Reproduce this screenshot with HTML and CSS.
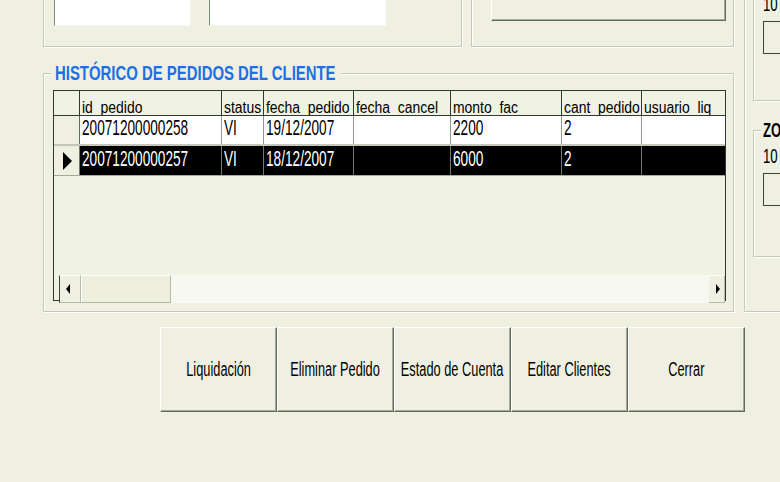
FILE: index.html
```html
<!DOCTYPE html>
<html lang="es">
<head>
<meta charset="utf-8">
<title>Histórico de pedidos</title>
<link rel="stylesheet" href="styles.css">
</head>
<body>
<div class="form">
  <div class="upper">
    <div class="main">
      <div class="tops">
        <div class="frame f1">
          <div class="textbox tb1"></div>
          <div class="textbox tb2"></div>
        </div>
        <div class="frame f2">
          <div class="btn topbtn"></div>
        </div>
      </div>
      <div class="frame hist">
        <div class="legend"><span class="sx">HISTÓRICO DE PEDIDOS DEL CLIENTE</span></div>
        <div class="grid">
          <div class="hdr">
            <div class="c ind"></div>
            <div class="c"><span class="sx">id_pedido</span></div>
            <div class="c"><span class="sx">status</span></div>
            <div class="c"><span class="sx">fecha_pedido</span></div>
            <div class="c"><span class="sx">fecha_cancel</span></div>
            <div class="c"><span class="sx">monto_fac</span></div>
            <div class="c"><span class="sx">cant_pedido</span></div>
            <div class="c"><span class="sx">usuario_liq</span></div>
          </div>
          <div class="row r1">
            <div class="c ind"></div>
            <div class="c"><span class="sx">20071200000258</span></div>
            <div class="c"><span class="sx">VI</span></div>
            <div class="c"><span class="sx">19/12/2007</span></div>
            <div class="c"></div>
            <div class="c"><span class="sx">2200</span></div>
            <div class="c"><span class="sx">2</span></div>
            <div class="c"></div>
          </div>
          <div class="row r2">
            <div class="c ind"><i class="cur"></i></div>
            <div class="c"><span class="sx">20071200000257</span></div>
            <div class="c"><span class="sx">VI</span></div>
            <div class="c"><span class="sx">18/12/2007</span></div>
            <div class="c"></div>
            <div class="c"><span class="sx">6000</span></div>
            <div class="c"><span class="sx">2</span></div>
            <div class="c"></div>
          </div>
          <div class="empty"></div>
          <div class="hscroll">
            <div class="sbbtn sbleft"><i class="arr-l"></i></div>
            <div class="thumb"></div>
            <div class="track"></div>
            <div class="sbbtn sbright"><i class="arr-r"></i></div>
          </div>
        </div>
      </div>
    </div>
    <div class="frame rightcol">
      <div class="frame sub1">
        <div class="lbl"><span class="sx">10</span></div>
        <div class="box"></div>
      </div>
      <div class="frame sub2">
        <div class="cap"><span class="sx">ZO</span></div>
        <div class="lbl"><span class="sx">10</span></div>
        <div class="box"></div>
      </div>
    </div>
  </div>
  <div class="buttons">
    <div class="btn"><span class="sc">Liquidación</span></div>
    <div class="btn"><span class="sc">Eliminar Pedido</span></div>
    <div class="btn"><span class="sc">Estado de Cuenta</span></div>
    <div class="btn"><span class="sc">Editar Clientes</span></div>
    <div class="btn"><span class="sc">Cerrar</span></div>
  </div>
</div>
</body>
</html>
```
FILE: styles.css
```css
html, body {
  margin: 0;
  padding: 0;
}
body {
  width: 780px;
  height: 482px;
  overflow: hidden;
  background: #f0f0e2;
  font-family: "Liberation Sans", Arial, sans-serif;
  color: #000;
}
.form {
  padding-left: 43px;
}
.upper {
  display: flex;
  align-items: flex-start;
  margin-top: -30px;
}
.main {
  width: 691px;
  flex-shrink: 0;
}
.tops {
  display: flex;
  height: 77px;
}
.frame {
  box-sizing: border-box;
  border: 1px solid #c6cab5;
  box-shadow: inset 1px 1px 0 #ffffff, 1px 1px 0 #ffffff;
}
.f1 {
  width: 419px;
  display: flex;
  align-items: flex-end;
  padding: 0 0 20px 10px;
}
.textbox {
  box-sizing: border-box;
  height: 50px;
  background: #ffffff;
  border: 1px solid;
  border-color: #7a8f79 #f7f8ee #f7f8ee #7a8f79;
}
.tb1 { width: 137px; }
.tb2 { width: 177px; margin-left: 18px; }
.f2 {
  width: 263px;
  margin-left: 9px;
  display: flex;
  align-items: flex-end;
  padding: 0 0 25px 19px;
}
.topbtn {
  width: 235px;
  height: 40px;
}

/* historic frame */
.hist {
  margin-top: 26px;
  height: 239px;
  padding-left: 9px;
}
.legend {
  box-sizing: border-box;
  margin: -10px 0 0 -2px;
  width: 290px;
  height: 18px;
  padding-left: 4px;
  background: #f0f0e2;
  font-size: 21px;
  font-weight: bold;
  line-height: 18px;
  color: #1c6fe6;
  white-space: nowrap;
}
.legend .sx { transform: scaleX(0.71); }
.sx {
  display: inline-block;
  transform-origin: left center;
  white-space: nowrap;
}
.grid {
  box-sizing: border-box;
  margin-top: 8px;
  width: 673px;
  height: 211px;
  border: 1px solid #2d3a2f;
  background: #f0f2e3;
  display: flex;
  flex-direction: column;
}
.hdr, .row {
  display: grid;
  grid-template-columns: 26px 142px 42px 90px 97px 111px 80px 83px;
  flex-shrink: 0;
}
.c {
  box-sizing: border-box;
  border-right: 1px solid #8f9a8e;
  overflow: hidden;
  white-space: nowrap;
  padding-left: 2px;
}
.c:last-child { border-right: none; }
.hdr {
  height: 24px;
  border-bottom: 1px solid #2d3a2f;
}
.hdr .c {
  border-right-color: #2d3a2f;
  font-size: 16px;
  line-height: 14px;
  display: flex;
  align-items: flex-end;
}
.hdr .sx { transform: scaleX(0.87); }
.row .c {
  font-size: 22px;
  line-height: 24px;
}
.row .sx { transform: scaleX(0.62); }
.row .ind {
  background: #f0f0e2;
  border-right-color: #5d6a5c;
}
.r1 {
  height: 28px;
  background: #ffffff;
  border-bottom: 2px solid #c3c8bb;
}
.r2 {
  height: 29px;
  background: #000000;
  color: #ffffff;
  border-bottom: 1px solid #a3ab9f;
}
.r2 .c {
  border-right-color: #6f7b6e;
  line-height: 26px;
}
.r2 .ind {
  display: flex;
  align-items: center;
  justify-content: center;
  padding-left: 1px;
}
.cur {
  width: 0;
  height: 0;
  border-left: 9px solid #000;
  border-top: 9px solid transparent;
  border-bottom: 9px solid transparent;
}
.empty {
  height: 99px;
  flex-shrink: 0;
}
.hscroll {
  height: 28px;
  margin-left: 5px;
  display: flex;
  flex-shrink: 0;
}
.sbbtn {
  box-sizing: border-box;
  background: #f0f0e2;
  border-top: 1px solid #ffffff;
  border-right: 1px solid #b7bca8;
  border-bottom: 1px solid #b7bca8;
  display: flex;
  align-items: center;
}
.sbleft {
  width: 22px;
  border-left: 1px solid #3a473a;
  padding-left: 6px;
}
.sbright {
  width: 16px;
  padding-left: 7px;
}
.arr-l {
  width: 0;
  height: 0;
  border-right: 4px solid #000;
  border-top: 5px solid transparent;
  border-bottom: 5px solid transparent;
}
.arr-r {
  width: 0;
  height: 0;
  border-left: 4px solid #000;
  border-top: 5px solid transparent;
  border-bottom: 5px solid transparent;
}
.thumb {
  box-sizing: border-box;
  width: 90px;
  background: #eeefdf;
  border-top: 1px solid #ffffff;
  border-left: 1px solid #ffffff;
  border-right: 1px solid #b3b8a4;
  border-bottom: 1px solid #b3b8a4;
}
.track {
  flex: 1;
  background: #f7f8f1;
}

/* right column */
.rightcol {
  margin-left: 10px;
  width: 120px;
  height: 342px;
  flex-shrink: 0;
  padding-left: 8px;
}
.sub1 {
  height: 130px;
  padding: 22px 0 0 9px;
}
.sub2 {
  height: 127px;
  margin-top: 29px;
  padding-left: 9px;
}
.lbl {
  font-size: 20px;
  line-height: 20px;
  height: 20px;
}
.lbl .sx, .cap .sx { transform: scaleX(0.66); }
.box {
  box-sizing: border-box;
  margin-top: 7px;
  width: 80px;
  height: 33px;
  border: 1px solid #3a473a;
  background: #f0f0e2;
}
.cap {
  margin: -10px 0 0 -2px;
  padding-left: 2px;
  width: 22px;
  height: 18px;
  line-height: 18px;
  font-size: 20px;
  font-weight: bold;
  background: #f0f0e2;
  white-space: nowrap;
}
.sub2 .lbl { margin-top: 7px; }

/* buttons */
.btn {
  box-sizing: border-box;
  background: #f0f0e2;
  border: 1px solid;
  border-color: #ffffff #5f6b5c #5f6b5c #ffffff;
  box-shadow: inset -1px -1px 0 #a5ad9a;
}
.buttons {
  display: flex;
  margin: 15px 0 0 117px;
}
.buttons .btn {
  width: 117px;
  height: 85px;
  display: flex;
  align-items: center;
  justify-content: center;
  font-size: 20px;
  white-space: nowrap;
}
.sc {
  display: inline-block;
  transform: scaleX(0.64);
  transform-origin: center center;
  white-space: nowrap;
}
```
